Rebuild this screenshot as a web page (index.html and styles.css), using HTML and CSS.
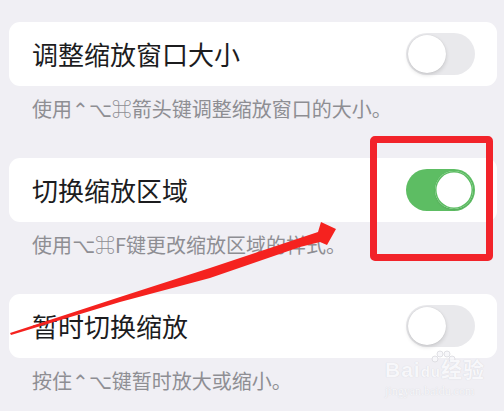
FILE: index.html
```html
<!DOCTYPE html>
<html lang="zh">
<head>
<meta charset="utf-8">
<link rel="stylesheet" href="styles.css">
</head>
<body>
<div class="page">
  <section class="group">
    <div class="card">
      <span class="title">调整缩放窗口大小</span>
      <span class="toggle"><span class="knob"></span></span>
    </div>
    <p class="desc">使用⌃⌥⌘箭头键调整缩放窗口的大小。</p>
  </section>
  <section class="group">
    <div class="card">
      <span class="title">切换缩放区域</span>
      <span class="toggle on"><span class="knob"></span></span>
    </div>
    <p class="desc">使用⌥⌘F键更改缩放区域的样式。</p>
  </section>
  <section class="group">
    <div class="card">
      <span class="title">暂时切换缩放</span>
      <span class="toggle"><span class="knob"></span></span>
    </div>
    <p class="desc">按住⌃⌥键暂时放大或缩小。</p>
  </section>

  <div class="highlight"></div>
  <svg class="arrow" width="504" height="411" viewBox="0 0 504 411">
    <polygon points="10,333 120,297 210,268 300,238 318,232 321,222 336,229 327,245 320,242 300,247 210,278 120,302 11,335" fill="#f5221f"/>
  </svg>
  <div class="watermark">
    <svg class="wm-paw" width="30" height="16" viewBox="0 0 30 16">
      <g fill="#f7f7fa" stroke="#d9d9de" stroke-width="0.8">
        <circle cx="6" cy="9" r="3"/>
        <circle cx="11" cy="4" r="3"/>
        <circle cx="18" cy="4" r="3"/>
        <circle cx="23" cy="9" r="3"/>
      </g>
    </svg>
    <span class="wm-logo">Bai<span class="wm-du">du</span>经验</span>
    <span class="wm-url">jingyan.baidu.com</span>
  </div>
</div>
</body>
</html>
```
FILE: styles.css
```css
* { box-sizing: border-box; }
html, body {
  margin: 0;
  padding: 0;
  background: #f0eff4;
}
body {
  font-family: "Noto Sans CJK SC", "DejaVu Sans", sans-serif;
  width: 504px;
  height: 411px;
  overflow: hidden;
}
.page {
  position: relative;
  width: 504px;
  height: 411px;
  padding: 22px 7px 0 9px;
}
.group {
  margin: 0 0 37px 0;
}
.card {
  height: 64px;
  background: #ffffff;
  border-radius: 11px;
  display: flex;
  align-items: center;
  justify-content: space-between;
  padding: 0 22px 0 23px;
}
.title {
  font-size: 26px;
  color: #1c1c1e;
  line-height: 1;
}
.toggle {
  width: 69px;
  height: 42px;
  border-radius: 21px;
  background: #e9e9ec;
  display: flex;
  align-items: center;
  padding: 0 2px;
}
.knob {
  width: 38px;
  height: 38px;
  border-radius: 50%;
  background: #ffffff;
  box-shadow: 0 2px 4px rgba(0,0,0,0.14), 0 0 1px rgba(0,0,0,0.14);
}
.toggle.on {
  background: #5dbd63;
  justify-content: flex-end;
}
.toggle.on .knob {
  box-shadow: 0 0 0 1.5px #5dbd63 inset, 0 1px 2px rgba(0,0,0,0.1);
}
.desc {
  margin: 11px 0 0 23px;
  font-size: 20px;
  line-height: 24px;
  color: #8e8e93;
}
.highlight {
  position: absolute;
  left: 370px;
  top: 136px;
  width: 123px;
  height: 125px;
  border: 7px solid #f2232a;
  border-radius: 5px;
}
.arrow {
  position: absolute;
  left: 0;
  top: 0;
}
.watermark {
  position: absolute;
  left: 385px;
  top: 350px;
  display: flex;
  flex-direction: column;
  align-items: flex-start;
}
.wm-paw {
  margin-left: 44px;
  margin-bottom: -8px;
}
.wm-logo {
  font-family: "Liberation Sans", "Noto Sans CJK SC", sans-serif;
  font-size: 21px;
  font-weight: bold;
  line-height: 24px;
  color: #f7f7fa;
  text-shadow: 0 0 1px #cfcfd5;
  letter-spacing: 1px;
}
.wm-du {
  font-size: 15px;
}
.wm-url {
  font-family: "Liberation Serif", serif;
  font-size: 12px;
  line-height: 14px;
  color: #f7f7fa;
  text-shadow: 0 0 1px #cfcfd5;
}
```
